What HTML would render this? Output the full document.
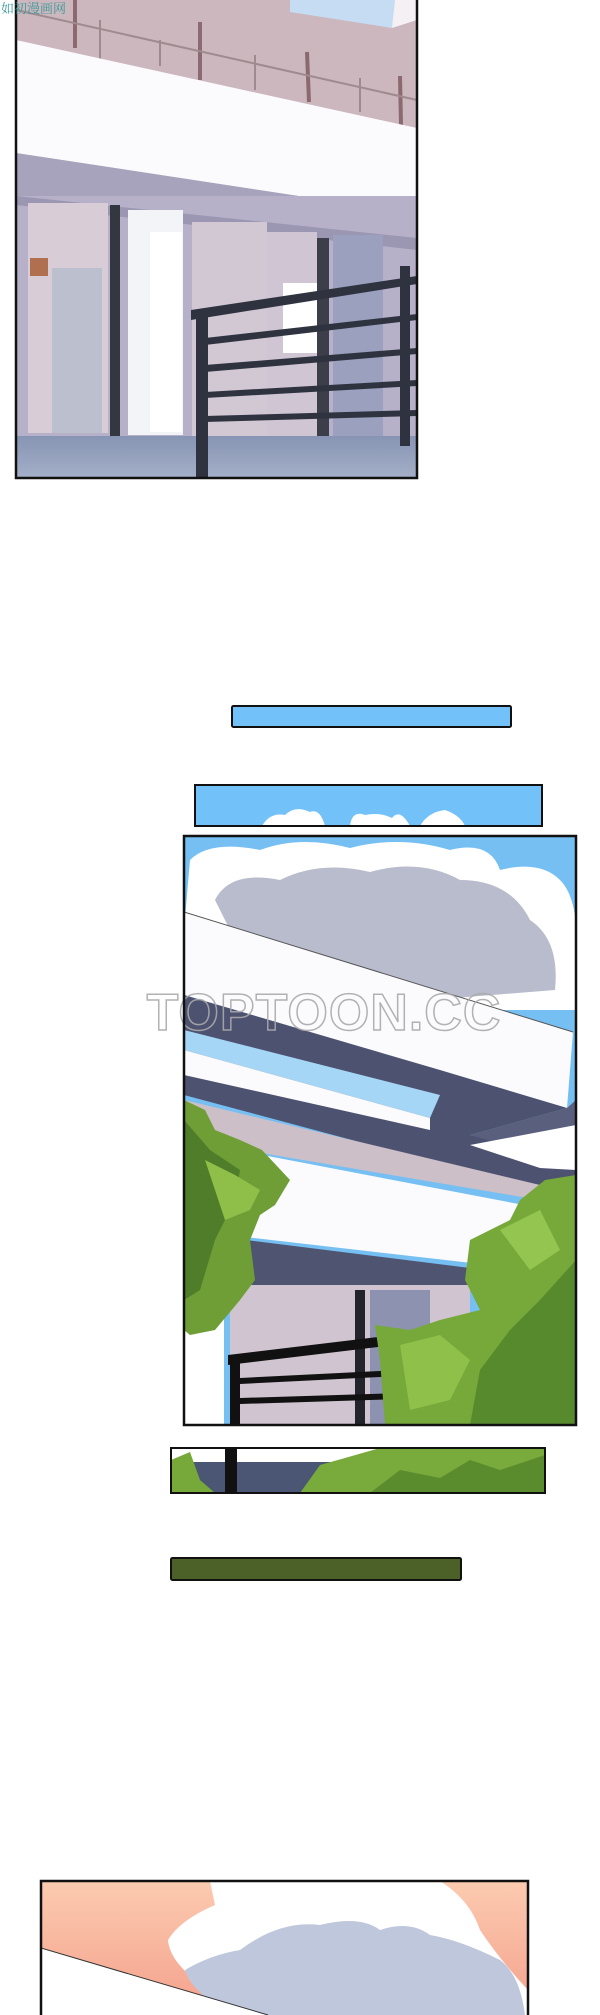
<!DOCTYPE html>
<html><head><meta charset="utf-8"><style>
html,body{margin:0;padding:0;background:#fff;width:600px;height:2015px;overflow:hidden}
.t{position:absolute;left:0;top:0;font:14px "Liberation Serif","Noto Serif CJK SC",serif;color:#3a9a9a}
</style></head><body>
<svg width="600" height="2015" viewBox="0 0 600 2015" style="position:absolute;left:0;top:0">
<defs>
<linearGradient id="floor" x1="0" y1="0" x2="0" y2="1"><stop offset="0" stop-color="#8794b3"/><stop offset="1" stop-color="#a4b0c8"/></linearGradient>
<linearGradient id="sunset" x1="0" y1="0" x2="0" y2="1"><stop offset="0" stop-color="#fccbb0"/><stop offset="1" stop-color="#f4a08c"/></linearGradient>
<clipPath id="c1"><rect x="16" y="0" width="401" height="478"/></clipPath>
<clipPath id="c2"><rect x="184" y="836" width="392" height="589"/></clipPath>
<clipPath id="c3"><rect x="171" y="1448" width="374" height="45"/></clipPath>
<clipPath id="c4"><rect x="41" y="1881" width="487" height="134"/></clipPath>
<clipPath id="cb"><rect x="195" y="785" width="347" height="41"/></clipPath>
</defs>

<!-- Panel 1 -->
<g clip-path="url(#c1)">
<rect x="16" y="0" width="401" height="478" fill="#c3b5c1"/>
<polygon points="290,0 400,0 392,28 290,10" fill="#b8d3ee"/>
<polygon points="16,0 417,0 417,130 16,40" fill="#cbb7bd"/>
<polygon points="16,0 290,0 392,28 417,20 417,0" fill="#f4f0f3"/>
<polygon points="290,0 395,0 392,28 290,12" fill="#c6dcf2"/>
<g stroke="#8a6a70" stroke-width="4">
<line x1="75" y1="0" x2="75" y2="48"/><line x1="200" y1="22" x2="200" y2="80"/><line x1="307" y1="52" x2="309" y2="102"/><line x1="400" y1="76" x2="401" y2="125"/>
</g>
<g stroke="#9f8a90" stroke-width="2">
<line x1="16" y1="10" x2="417" y2="100"/>
<line x1="100" y1="20" x2="100" y2="60"/><line x1="160" y1="40" x2="160" y2="66"/><line x1="255" y1="55" x2="255" y2="90"/><line x1="360" y1="78" x2="360" y2="112"/>
</g>
<polygon points="16,40 417,128 417,214 16,153" fill="#fbfbfd"/>
<polygon points="16,153 417,214 417,250 16,200" fill="#a8a3bd"/>
<rect x="16" y="196" width="401" height="240" fill="#b6b0c8"/>
<polygon points="16,196 417,238 417,250 16,205" fill="#9b97b2"/>
<rect x="28" y="203" width="80" height="230" fill="#d8ccd6"/>
<rect x="52" y="268" width="50" height="165" fill="#bcbfce"/>
<rect x="30" y="258" width="18" height="18" fill="#b07050"/>
<rect x="110" y="205" width="10" height="232" fill="#33373f"/>
<rect x="128" y="210" width="55" height="225" fill="#f3f4f8"/>
<rect x="150" y="232" width="32" height="200" fill="#fff"/>
<rect x="192" y="222" width="75" height="215" fill="#d2c8d4"/>
<rect x="267" y="232" width="50" height="205" fill="#d0c5d2"/>
<rect x="283" y="283" width="40" height="70" fill="#fff"/>
<rect x="317" y="238" width="12" height="200" fill="#3c3f4a"/>
<rect x="333" y="235" width="50" height="205" fill="#9aa0bd"/>
<rect x="16" y="436" width="401" height="42" fill="url(#floor)"/>
<g fill="#2f3340">
<polygon points="191,310 417,276 417,284 191,320"/>
<rect x="196" y="312" width="12" height="166"/>
<rect x="400" y="266" width="10" height="180"/>
<polygon points="205,338 417,314 417,320 205,345"/>
<polygon points="205,365 417,348 417,354 205,372"/>
<polygon points="205,392 417,380 417,386 205,398"/>
<polygon points="205,416 417,410 417,416 205,422"/>
</g>
</g>
<rect x="16" y="-2" width="401" height="480" fill="none" stroke="#111" stroke-width="2.5"/>
<text x="1" y="13" font-family="Liberation Serif, Noto Serif CJK SC, serif" font-size="13" fill="#3c9a9a">如初漫画网</text>

<!-- Blue bars -->
<rect x="232" y="706" width="279" height="21" rx="1.5" fill="#72c1f8" stroke="#111" stroke-width="2"/>
<g clip-path="url(#cb)">
<rect x="195" y="785" width="347" height="41" fill="#72c1f8"/>
<path d="M262,826 Q270,812 285,815 Q295,805 310,812 Q320,808 325,826 Z M350,826 Q352,810 365,815 Q380,812 392,818 Q400,808 410,826 Z M420,826 Q428,812 445,810 Q460,815 465,826 Z" fill="#fff"/>
</g>
<rect x="195" y="785" width="347" height="41" fill="none" stroke="#111" stroke-width="2"/>

<!-- Big panel -->
<g clip-path="url(#c2)">
<rect x="184" y="836" width="392" height="589" fill="#76bff3"/>
<path d="M190,860 Q210,840 260,850 Q300,835 350,848 Q400,835 450,850 Q490,840 500,870 Q540,860 560,880 Q580,900 576,960 L576,1010 L420,1010 L184,930 Z" fill="#fff"/>
<path d="M215,900 Q230,870 280,880 Q320,860 370,872 Q420,858 460,880 Q510,880 530,920 Q560,940 555,990 L430,1000 L230,930 Z" fill="#b8bccc"/>
<polygon points="184,912 573,1032 567,1108 184,995" fill="#fbfbfd"/>
<line x1="184" y1="912" x2="573" y2="1032" stroke="#555" stroke-width="1"/>
<polygon points="184,995 440,1070 567,1108 470,1135 576,1160 576,1200 184,1095" fill="#4d5270"/>
<polygon points="184,1030 440,1095 430,1118 184,1050" fill="#a5d6f5"/>
<polygon points="184,1050 430,1118 430,1130 184,1075" fill="#fbfbfd"/>
<polygon points="470,1135 567,1108 576,1100 576,1165" fill="#5a5f7d"/>
<polygon points="470,1145 576,1125 576,1170 540,1168" fill="#fff"/>
<polygon points="184,1100 540,1185 540,1200 184,1140" fill="#cdbfc8"/>
<polygon points="184,1140 576,1215 576,1275 184,1230" fill="#fbfbfd"/>
<polygon points="230,1238 470,1268 470,1300 230,1290" fill="#4f5470"/>
<rect x="230" y="1285" width="240" height="140" fill="#cfc4cf"/>
<rect x="184" y="1310" width="40" height="115" fill="#fff"/>
<rect x="355" y="1290" width="10" height="135" fill="#22242c"/>
<rect x="370" y="1290" width="60" height="135" fill="#8d92b0"/>
<g fill="#111">
<polygon points="228,1355 394,1335 394,1345 228,1365"/>
<rect x="230" y="1355" width="10" height="70"/>
<polygon points="240,1378 400,1370 400,1376 240,1384"/>
<polygon points="240,1398 400,1393 400,1399 240,1404"/>
</g>
<!-- left tree -->
<path d="M184,1100 L205,1110 L215,1130 L240,1140 L262,1150 L290,1180 L275,1205 L260,1215 L250,1240 L255,1280 L240,1300 L215,1330 L190,1335 L184,1330 Z" fill="#6f9e36"/>
<path d="M184,1120 L210,1150 L240,1170 L235,1200 L215,1240 L200,1290 L184,1300 Z" fill="#4f7d2a"/>
<path d="M205,1160 L235,1175 L260,1190 L250,1210 L225,1220 Z" fill="#8fbf49"/>
<!-- right tree -->
<path d="M576,1175 L545,1180 L520,1200 L510,1220 L470,1240 L465,1280 L480,1310 L440,1320 L410,1330 L375,1325 L380,1360 L385,1425 L576,1425 Z" fill="#76a83a"/>
<path d="M576,1260 L540,1300 L510,1330 L480,1370 L470,1425 L576,1425 Z" fill="#568a2c"/>
<path d="M400,1345 L440,1335 L470,1360 L450,1400 L410,1410 Z" fill="#8fc04a"/>
<path d="M500,1230 L540,1210 L560,1250 L530,1270 Z" fill="#94c550"/>
</g>
<text x="324" y="1030" text-anchor="middle" font-family="Liberation Sans, sans-serif" font-size="52" font-weight="bold" fill="none" stroke="#aaa" stroke-width="1.5" letter-spacing="1" opacity="0.9">TOPTOON.CC</text>
<rect x="184" y="836" width="392" height="589" fill="none" stroke="#111" stroke-width="2.5"/>

<!-- green strip -->
<g clip-path="url(#c3)">
<rect x="171" y="1448" width="374" height="45" fill="#fff"/>
<rect x="171" y="1462" width="200" height="31" fill="#4a5674"/>
<rect x="225" y="1448" width="12" height="45" fill="#111"/>
<path d="M171,1460 L190,1452 L200,1480 L215,1493 L171,1493 Z" fill="#76a83a"/>
<path d="M300,1493 L320,1465 L345,1458 L380,1448 L545,1448 L545,1493 Z" fill="#78aa3c"/>
<path d="M370,1493 L400,1470 L440,1478 L470,1460 L500,1470 L545,1455 L545,1493 Z" fill="#5a8c2e"/>
</g>
<rect x="171" y="1448" width="374" height="45" fill="none" stroke="#111" stroke-width="2"/>

<!-- dark green bar -->
<rect x="171" y="1558" width="290" height="22" rx="1.5" fill="#4b6128" stroke="#111" stroke-width="2"/>

<!-- bottom panel -->
<g clip-path="url(#c4)">
<rect x="41" y="1881" width="487" height="134" fill="url(#sunset)"/>
<path d="M210,1881 L440,1881 Q470,1900 480,1930 Q500,1960 528,1990 L528,2015 L240,2015 L210,1990 Q170,1965 168,1940 Q180,1920 215,1905 Z" fill="#fff"/>
<path d="M240,1950 Q280,1920 320,1925 Q360,1915 380,1930 Q410,1920 430,1935 Q460,1940 500,1960 Q520,1975 525,2015 L230,2015 Q190,1990 185,1970 Q210,1955 240,1950 Z" fill="#bfc7dc"/>
<polygon points="41,1948 268,2015 41,2015" fill="#fff"/>
<line x1="41" y1="1948" x2="268" y2="2015" stroke="#333" stroke-width="1"/>
</g>
<rect x="41" y="1881" width="487" height="140" fill="none" stroke="#111" stroke-width="2.5"/>
</svg>
</body></html>
